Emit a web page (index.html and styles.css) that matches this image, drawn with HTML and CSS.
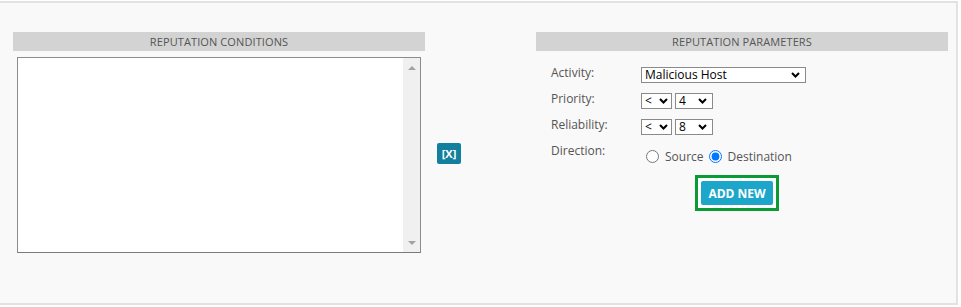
FILE: index.html
```html
<!DOCTYPE html>
<html lang="en">
<head>
  <meta charset="UTF-8">
  <title>Reputation</title>
  <link rel="stylesheet" href="styles.css">
</head>
<body>

<div class="frame">
  <div class="col">
    <div class="head">REPUTATION CONDITIONS</div>
    <div class="listbox">
      <div class="list-body"></div>
      <div class="track">
        <span class="arrow up"></span>
        <span class="arrow down"></span>
      </div>
    </div>
  </div>

  <div class="mid">
    <button class="del">[X]</button>
  </div>

  <div class="col">
    <div class="head">REPUTATION PARAMETERS</div>
    <div class="form">
      <div class="row">
        <label>Activity:</label>
        <span class="sel wide">
          <select><option>Malicious Host</option></select>
          <svg class="chev" width="9" height="6" viewBox="0 0 9 6"><path d="M1 1l3.5 3.5L8 1" fill="none" stroke="#000" stroke-width="2"/></svg>
        </span>
      </div>
      <div class="row">
        <label>Priority:</label>
        <span class="sel op">
          <select><option>&lt;</option></select>
          <svg class="chev" width="9" height="6" viewBox="0 0 9 6"><path d="M1 1l3.5 3.5L8 1" fill="none" stroke="#000" stroke-width="2"/></svg>
        </span>
        <span class="sel num">
          <select><option>4</option></select>
          <svg class="chev" width="9" height="6" viewBox="0 0 9 6"><path d="M1 1l3.5 3.5L8 1" fill="none" stroke="#000" stroke-width="2"/></svg>
        </span>
      </div>
      <div class="row">
        <label>Reliability:</label>
        <span class="sel op">
          <select><option>&lt;</option></select>
          <svg class="chev" width="9" height="6" viewBox="0 0 9 6"><path d="M1 1l3.5 3.5L8 1" fill="none" stroke="#000" stroke-width="2"/></svg>
        </span>
        <span class="sel num">
          <select><option>8</option></select>
          <svg class="chev" width="9" height="6" viewBox="0 0 9 6"><path d="M1 1l3.5 3.5L8 1" fill="none" stroke="#000" stroke-width="2"/></svg>
        </span>
      </div>
      <div class="row dir">
        <label>Direction:</label>
        <div class="radios">
          <input type="radio" name="dir" id="src"><span class="rtext">Source</span>
          <input type="radio" name="dir" id="dst" checked><span class="rtext">Destination</span>
        </div>
      </div>
      <div class="add-wrap">
        <div class="add-box">
          <button class="add">ADD NEW</button>
        </div>
      </div>
    </div>
  </div>
</div>

</body>
</html>
```

FILE: styles.css
```css
body {
  margin: 0;
  background: #fff;
  font-family: "Open Sans", Tahoma, sans-serif;
}

.frame {
  box-sizing: border-box;
  display: flex;
  width: 958px;
  height: 304px;
  margin-top: 1px;
  padding: 29px 0 0 13px;
  background: #f9f9f9;
  border: 2px solid #e2e2e2;
  border-left: none;
}

.col {
  width: 412px;
}

.head {
  height: 19px;
  line-height: 19px;
  background: #d3d3d3;
  color: #555;
  font-size: 11px;
  letter-spacing: 0.1px;
  text-align: center;
}

.listbox {
  display: flex;
  width: 404px;
  height: 196px;
  margin: 6px 0 0 4px;
  box-sizing: border-box;
  border: 1px solid #8c8c8c;
  border-bottom-color: #7a7a7a;
  background: #fff;
}

.list-body {
  flex: 1;
}

.track {
  width: 17px;
  background: #f0f0f0;
  display: flex;
  flex-direction: column;
  justify-content: space-between;
  align-items: center;
  padding: 8px 0 7px;
}

.arrow {
  width: 0;
  height: 0;
  border-left: 4px solid transparent;
  border-right: 4px solid transparent;
}

.arrow.up {
  border-bottom: 4px solid #a3a3a3;
}

.arrow.down {
  border-top: 4px solid #a3a3a3;
}

.mid {
  width: 111px;
}

.del {
  margin: 111px 0 0 12px;
  width: 24px;
  height: 21px;
  padding: 0;
  border: none;
  border-radius: 2px;
  background: #137f9e;
  color: #fff;
  font-family: "Open Sans", sans-serif;
  font-size: 11px;
  font-weight: bold;
}

.form {
  padding: 16px 0 0 15px;
}

.row {
  display: flex;
  align-items: flex-start;
  height: 26px;
}

.row label {
  width: 90px;
  color: #555;
  font-size: 12px;
  line-height: 14px;
  margin-top: -1px;
}

.sel {
  position: relative;
  display: block;
  height: 16px;
}

.sel select {
  appearance: none;
  -webkit-appearance: none;
  display: block;
  width: 100%;
  height: 16px;
  box-sizing: border-box;
  border: 1px solid #8a8a8a;
  border-radius: 0;
  background: #fff;
  font-family: "Open Sans", sans-serif;
  font-size: 12px;
  line-height: 14px;
  padding: 0 3px;
  margin: 0;
  color: #000;
}

.chev {
  position: absolute;
  right: 6px;
  top: 5px;
  pointer-events: none;
}

.sel.wide {
  width: 165px;
}

.sel.op {
  width: 31px;
}

.sel.op .chev {
  right: 4px;
}

.sel.num {
  width: 38px;
  margin-left: 3px;
}

.radios {
  display: flex;
  align-items: center;
  padding-top: 3px;
  font-size: 12px;
  color: #555;
}

.radios input {
  width: 13px;
  height: 13px;
  margin: 0 3px 0 5px;
}

.rtext {
  margin-left: 3px;
}

.add-wrap {
  padding: 4px 0 0 144px;
}

.add-box {
  display: inline-block;
  border: 3px solid #0a9a36;
  padding: 3px;
  background: #fff;
}

.add {
  display: block;
  width: 72px;
  height: 24px;
  padding: 0;
  border: none;
  border-radius: 2px;
  background: #1ca7ca;
  color: #fff;
  font-family: "Open Sans", sans-serif;
  font-size: 12px;
  font-weight: bold;
}
```
